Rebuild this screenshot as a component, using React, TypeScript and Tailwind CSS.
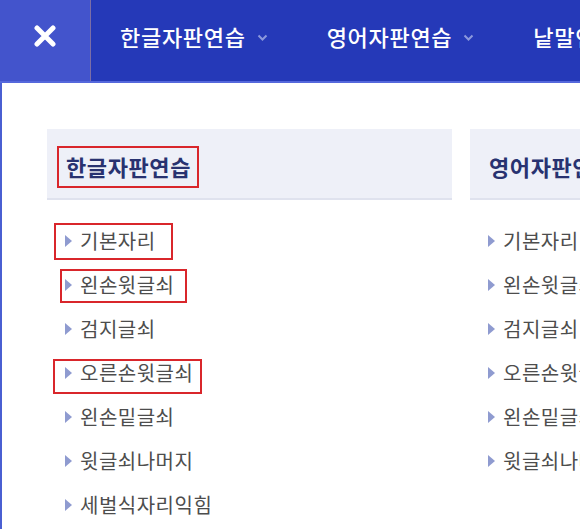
import React from 'react'

// Korean keyboard-practice mega menu (open state)
interface Column {
    title: string
    items: string[]
}

interface Mark {
    left: number
    top: number
    width: number
    height: number
}

const navItems = ['한글자판연습', '영어자판연습', '낱말연습']

const columns: Column[] = [
    {
        title: '한글자판연습',
        items: ['기본자리', '왼손윗글쇠', '검지글쇠', '오른손윗글쇠', '왼손밑글쇠', '윗글쇠나머지', '세벌식자리익힘'],
    },
    {
        title: '영어자판연습',
        items: ['기본자리', '왼손윗글쇠', '검지글쇠', '오른손윗글쇠', '왼손밑글쇠', '윗글쇠나머지'],
    },
]

// red annotation boxes drawn over the first column
const itemMarks: Record<number, Mark> = {
    0: { left: 7, top: 4, width: 119, height: 37 },
    1: { left: 13, top: 6, width: 127, height: 34 },
    3: { left: 6, top: 8, width: 149, height: 35 },
}

function RedMark({ m }: { m: Mark }) {
    return (
        <div
            className="absolute border-2 border-[#d9262b] pointer-events-none"
            style={{ left: m.left, top: m.top, width: m.width, height: m.height }}
        />
    )
}

function Chevron() {
    return (
        <svg width="11" height="7" viewBox="0 0 11 7" className="mt-[2px]">
            <polyline points="1.5,1.5 5.5,5.5 9.5,1.5" fill="none" stroke="#8c98dc" strokeWidth="2" />
        </svg>
    )
}

function MenuColumn({ col, marked }: { col: Column; marked: boolean }) {
    return (
        <div className="relative w-[405px] shrink-0">
            <div className="relative h-[71px] flex items-center pl-[19px] pt-[6px] bg-[#eef0f8] border-b-2 border-[#dfe2ee]">
                <span className="text-[22px] font-bold text-[#283270] tracking-[0.6px] whitespace-nowrap">{col.title}</span>
                {marked && <RedMark m={{ left: 10, top: 17, width: 142, height: 42 }} />}
            </div>
            <ul className="mt-[19px]">
                {col.items.map((item, i) => (
                    <li key={item} className="relative h-[44px] flex items-center pl-[18px] gap-[8px]">
                        <span className="w-0 h-0 border-y-[6px] border-y-transparent border-l-[7px] border-l-[#8f9bd0]" />
                        <span className="text-[20px] text-[#4d4d4d] leading-none tracking-[0.5px] whitespace-nowrap">{item}</span>
                        {marked && itemMarks[i] && <RedMark m={itemMarks[i]} />}
                    </li>
                ))}
            </ul>
        </div>
    )
}

export default function App() {
    return (
        <div
            className="relative w-[580px] h-[529px] overflow-hidden bg-white"
            style={{ fontFamily: '"Noto Sans CJK KR", "Noto Sans", sans-serif' }}
        >
            {/* Top bar */}
            <div className="flex h-[83px] bg-[#2539b8] border-b-2 border-[#5568dc]">
                <button className="w-[91px] shrink-0 flex items-center justify-center pb-[9px] bg-[#4354cc] border-r border-[#7c6ea6]">
                    <svg width="22" height="22" viewBox="0 0 22 22">
                        <path d="M3 3 L19 19 M19 3 L3 19" stroke="#fff" strokeWidth="5" strokeLinecap="round" />
                    </svg>
                </button>
                {navItems.map((n, i) => (
                    <div key={n} className="flex items-center gap-[11px] pl-[29px] pr-[30px] pb-[8px] shrink-0">
                        <span className="text-[22px] font-medium text-white tracking-[0.7px] whitespace-nowrap">{n}</span>
                        {i < 2 && <Chevron />}
                    </div>
                ))}
            </div>

            {/* Dropdown panel */}
            <div className="h-full border-l-2 border-[#4a5fd2] pl-[45px] pt-[46px]">
                <div className="flex gap-[18px]">
                    {columns.map((c, i) => (
                        <MenuColumn key={c.title} col={c} marked={i === 0} />
                    ))}
                </div>
            </div>
        </div>
    )
}
